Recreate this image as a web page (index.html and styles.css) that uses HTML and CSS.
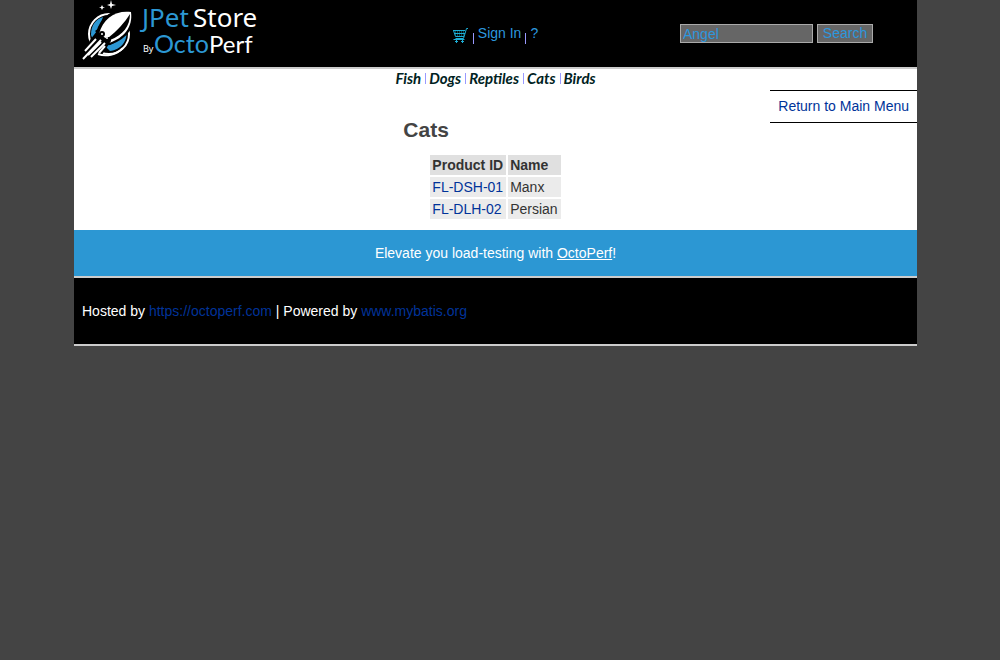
FILE: index.html
```html
<!DOCTYPE html>
<html lang="en">
<head>
<meta charset="utf-8">
<title>JPetStore Demo</title>
<link rel="stylesheet" href="styles.css">
</head>
<body>
<header class="header">
  <a class="logo" href="#" aria-label="JPetStore by OctoPerf">
    <svg class="logo-art" width="184" height="66" viewBox="0 0 184 66">
      <circle cx="35" cy="34" r="20" fill="#000" stroke="#fff" stroke-width="2"/>
      <path d="M17 35C17 25 22 19 29 17L25 28L21 31L24 34L19 40ZM35 45C42 43 48 38 52 32C54 40 47 50 36 51L31 46Z" fill="#2c97d3"/>
      <path d="M58 11C60 24 54 36 36 43L24 33C28 18 40 9 58 11Z" fill="#fff" stroke="#000" stroke-width="4"/>
      <path d="M57 12C42 10 29 18 25 34L35 43C50 38 59 27 57 12Z" fill="#fff"/>
      <path d="M56 14C51 22 43 31 34 38L36 40C49 35 56 26 56 14Z" fill="#000"/>
      <path d="M23 31L36 42L32 49L27 56L8 56L16 40Z" fill="#000"/>
      <path d="M9 59L27 40M11 51L22 39M14 55L27 42M17 57L31 43M25 53L31 46" stroke="#fff" stroke-width="2"/>
      <path d="M24 54C32 57 42 55 49 48" fill="none" stroke="#fff" stroke-width="2"/>
      <g fill="#000"><circle cx="28" cy="34" r="3"/><circle cx="34" cy="40" r="3"/></g>
      <circle cx="28" cy="34" r="1" fill="#fff"/><circle cx="33" cy="38" r="1" fill="#fff"/>
      <path d="M37 0L38 4L42 5L38 6L37 9L36 6L33 5L36 4ZM28 5L29 7L31 8L29 8L28 10L27 8L25 8L27 7Z" fill="#fff"/>
      <text class="logo-top" x="68" y="27"><tspan fill="#2c97d3">JPet</tspan><tspan class="logo-store" x="119">Store</tspan></text>
      <text class="logo-by" x="69" y="52">By</text>
      <text class="logo-bottom" x="80" y="53"><tspan fill="#2c97d3">Octo</tspan><tspan class="logo-perf" x="135">Perf</tspan></text>
    </svg>
  </a>
  <nav class="menu" aria-label="Account">
    <a class="cart" href="#" aria-label="Cart">
      <svg width="16" height="16" viewBox="0 0 16 16" fill="none" stroke="#1cacd4">
        <path d="M15 0.500H13.500L10.500 10.500H2.500M0 2.500H12M0.500 2.500L2.500 8.500H11M1 5.500H12" stroke-width="1"/>
        <path d="M2 4H12M2 7H11" stroke="#178c9c" stroke-width="1" stroke-dasharray="1 1"/>
        <path d="M11.500 11.500H0.500M3.500 11.500V15M9.500 11.500V15M2 13.500H5M8 13.500H11" stroke-width="1"/>
      </svg>
    </a>
    <i class="bar"></i><a href="#">Sign In</a><i class="bar"></i><a href="#">?</a>
  </nav>
  <form class="search">
    <input class="field" type="text" value="Angel" aria-label="Search products">
    <button class="button" type="button">Search</button>
  </form>
</header>
<main class="content">
  <nav class="quick" aria-label="Categories">
    <a href="#">Fish</a><a href="#">Dogs</a><a href="#">Reptiles</a><a href="#">Cats</a><a href="#">Birds</a>
  </nav>
  <div class="catalog">
    <h2 class="title">Cats</h2>
    <a class="back" href="#">Return to Main Menu</a>
    <table class="products">
      <thead><tr><th>Product ID</th><th>Name</th></tr></thead>
      <tbody>
        <tr><td><a href="#">FL-DSH-01</a></td><td>Manx</td></tr>
        <tr><td><a href="#">FL-DLH-02</a></td><td>Persian</td></tr>
      </tbody>
    </table>
  </div>
</main>
<footer>
  <div class="banner">Elevate you load-testing with <a href="#">OctoPerf</a>!</div>
  <div class="powered">Hosted by <a href="#">https://octoperf.com</a> | Powered by <a href="#">www.mybatis.org</a></div>
</footer>
</body>
</html>
```
FILE: styles.css
```css
body {
  margin: 0;
  padding: 0 83px 0 74px;
  background: #444;
  color: #333;
  font: 14px/18px "Liberation Sans", Arial, sans-serif;
}
a { color: #039; text-decoration: none; }
.header {
  display: grid;
  grid-template-columns: 1fr auto 1fr;
  align-items: start;
  background: #000;
  border-bottom: 2px solid #ccc;
}
.logo { display: block; height: 67px; }
.logo-art { display: block; overflow: visible; }
.logo-top { font: 26px "Noto Sans", sans-serif; }
.logo-store { fill: #fff; }
.logo-by { font: 9px "Noto Sans", sans-serif; fill: #fff; }
.logo-bottom { font: 25px Lato, sans-serif; fill: #fff; }
.logo-perf { font-size: 24px; }
.menu { display: flex; gap: 4px; padding-top: 24px; }
.menu a { color: #2c97de; }
.cart { padding-top: 4px; height: 16px; }
.bar { width: 1px; height: 11px; margin-top: 9px; background: #99f; }
.search {
  display: flex;
  justify-content: flex-end;
  gap: 4px;
  padding: 24px 44px 0 0;
}
.field, .button {
  box-sizing: border-box;
  height: 19px;
  border: 1px solid #aaa;
  background: #666;
  color: #2c97de;
  font: 14px/17px "Liberation Sans", Arial, sans-serif;
}
.field { width: 133px; padding: 0 2px; }
.button { width: 56px; padding: 0; }
.content { background: #fff; }
.quick {
  display: flex;
  justify-content: center;
  font: italic bold 15px/18px Lato, sans-serif;
}
.quick a { color: #022; padding: 0 4px; }
.quick a + a {
  background: linear-gradient(#99f, #99f) 0 4px / 1px 11px no-repeat;
}
.catalog {
  display: grid;
  grid-template-columns: 1fr auto;
  padding: 3px 0 9px 8px;
}
.title {
  margin: 27px 0 0;
  color: #444;
  font-size: 21px;
  line-height: 26px;
  text-align: center;
}
.back {
  align-self: start;
  padding: 6px 8px 7px;
  border: solid #000;
  border-width: 1px 0;
}
.products {
  grid-column: 1 / -1;
  justify-self: center;
  margin: 10px 8px 0 0;
  border-spacing: 2px;
}
.products th { padding: 1px 3px 1px 2px; background: #e0e0e0; text-align: left; }
.products td { padding: 1px 3px 1px 2px; background: #ebebeb; }
.banner {
  padding: 14px 8px;
  background: #2c97d3;
  border-bottom: 2px solid #ccc;
  color: #fff;
  text-align: center;
}
.banner a { color: #fff; text-decoration: underline; }
.powered {
  padding: 24px 8px;
  background: #000;
  border-bottom: 2px solid #ccc;
  color: #fff;
}
```
